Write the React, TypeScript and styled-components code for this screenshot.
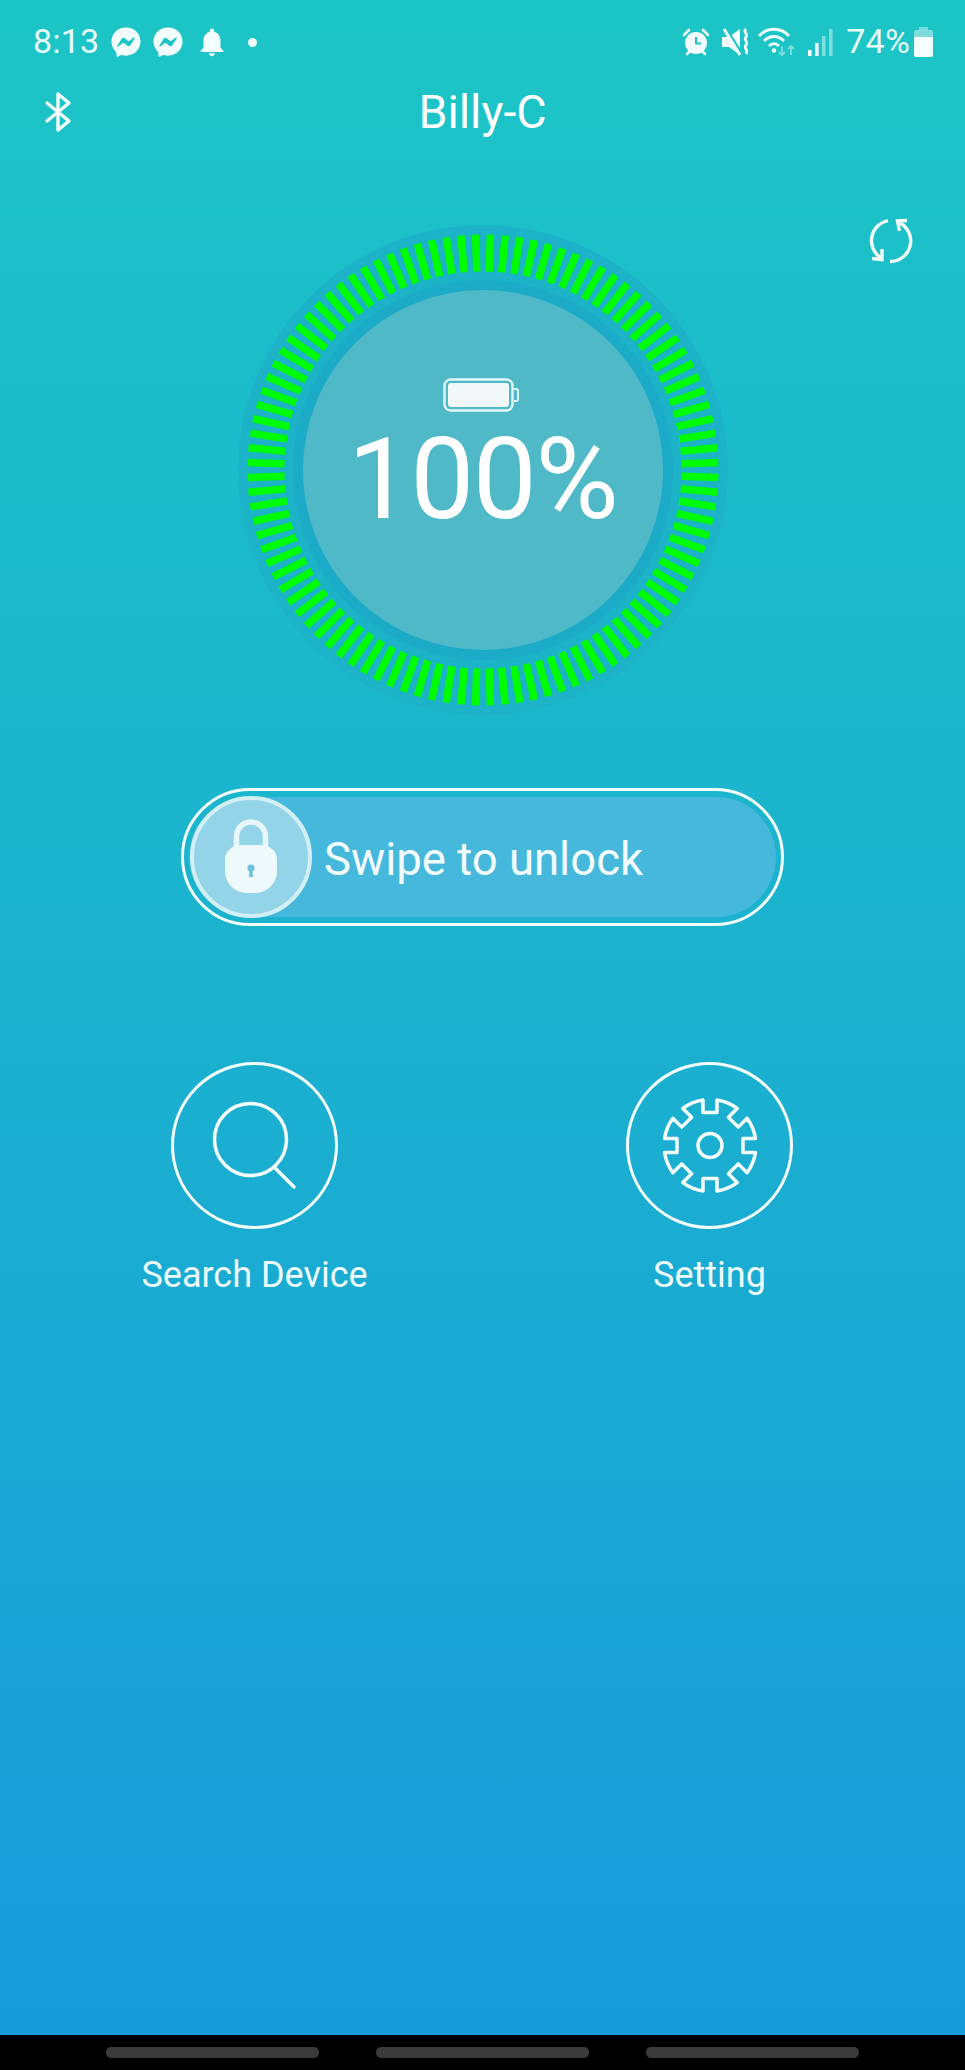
import React from 'react'
import styled, { createGlobalStyle } from 'styled-components'
import { FaFacebookMessenger } from 'react-icons/fa'
import { MdNotifications } from 'react-icons/md'

const GlobalStyle = createGlobalStyle`
  html, body {
    margin: 0;
    padding: 0;
    background: #000;
  }
  * {
    box-sizing: border-box;
  }
`

const Screen = styled.div`
  width: 965px;
  height: 2070px;
  display: flex;
  flex-direction: column;
  overflow: hidden;
  font-family: Roboto, "Liberation Sans", sans-serif;
  color: #fff;
`

const Content = styled.div`
  flex: 1;
  display: flex;
  flex-direction: column;
  background: linear-gradient(180deg, #1cc5c6 0%, #1bb3ce 45%, #189bdb 100%);
`

const StatusBar = styled.div`
  height: 44px;
  margin-top: 20px;
  padding: 0 32px 0 33px;
  display: flex;
  align-items: center;
`

const StatusGroup = styled.div<{ $right?: boolean }>`
  display: flex;
  align-items: center;
  gap: 12px;
  margin-left: ${(p) => (p.$right ? 'auto' : '0')};
`

const StatusText = styled.span<{ $tight?: boolean }>`
  font-size: 34px;
  line-height: 44px;
  margin-top: -2px;
  color: #e8fbfa;
  letter-spacing: 0.2px;
  margin-right: ${(p) => (p.$tight ? '-8px' : '0')};
`

const Dot = styled.span`
  width: 9px;
  height: 9px;
  margin-left: 7px;
  border-radius: 50%;
  background: #f2fdfc;
`

const WifiSlot = styled.span`
  display: flex;
  margin-left: -4px;
`

const Header = styled.div`
  height: 64px;
  margin-top: 16px;
  display: grid;
  grid-template-columns: 1fr auto 1fr;
  align-items: center;
  padding-left: 44px;
`

const Title = styled.h1`
  margin: 0;
  font-size: 46.5px;
  font-weight: 400;
  line-height: 64px;
  padding-right: 44px;
`

const GaugeRow = styled.div`
  margin-top: 74px;
  display: grid;
  grid-template-columns: 1fr 490px 1fr;
`

const RefreshCell = styled.div`
  grid-column: 3;
  display: flex;
  justify-content: flex-end;
  padding-right: 52px;
`

const Gauge = styled.div`
  grid-column: 2;
  grid-row: 1;
  position: relative;
  width: 490px;
  height: 490px;
  margin-top: 7px;
  border-radius: 50%;
  background: #1cb3c8;
  display: flex;
  align-items: center;
  justify-content: center;
`

const TickRing = styled.svg`
  position: absolute;
  inset: 0;
`

const Dial = styled.div`
  width: 380px;
  height: 380px;
  border-radius: 50%;
  border: 10px solid #1cabc6;
  background: #4fb9c8;
  display: flex;
  flex-direction: column;
  align-items: center;
  padding-top: 88px;
`

const DialBatteryWrap = styled.div`
  margin-right: 4px;
  line-height: 0;
`

const Percent = styled.div`
  font-size: 114px;
  font-weight: 400;
  line-height: 116px;
  margin-top: 9px;
  letter-spacing: -1.5px;
`

const SwipeFrame = styled.div`
  width: 603px;
  height: 138px;
  margin: 73px 0 0 181px;
  padding: 6px 5px;
  border: 3px solid #f4fdfd;
  border-radius: 69px;
`

const SwipeTrack = styled.div`
  height: 120px;
  border-radius: 60px;
  background: #46b8dc;
  display: flex;
  align-items: center;
  gap: 12px;
`

const Knob = styled.div`
  width: 122px;
  height: 122px;
  margin: -1px 0 -1px 1px;
  flex: none;
  border-radius: 50%;
  border: 4px solid #d3eff6;
  background: #93d4e8;
  display: flex;
  align-items: center;
  justify-content: center;
`

const SwipeLabel = styled.span`
  font-size: 45.5px;
  line-height: 60px;
  padding-top: 5px;
  color: #f3fcfe;
`

const Actions = styled.div`
  margin: 136px 0 0 104.5px;
  display: grid;
  grid-template-columns: 300px 300px;
  column-gap: 155px;
`

const Action = styled.div`
  display: flex;
  flex-direction: column;
  align-items: center;
`

const ActionCircle = styled.div`
  width: 167px;
  height: 167px;
  border-radius: 50%;
  border: 3.5px solid #f4fdfd;
  display: flex;
  align-items: center;
  justify-content: center;
`

const ActionLabel = styled.span`
  margin-top: 24px;
  font-size: 36px;
  line-height: 44px;
  color: #eefbfd;
`

const NavBar = styled.div`
  height: 35px;
  flex: none;
  background: #000;
  padding: 12px 106px 0;
  display: flex;
  justify-content: space-between;
  align-items: flex-start;
`

const NavPill = styled.div`
  width: 213px;
  height: 11px;
  border-radius: 5px;
  background: #3a3a3a;
`

const ticks = Array.from({ length: 100 }, (_, i) => (i * 360) / 100 + 1.8)

// gear outline: rim with 8 square notches cut in
function gearPath(cx: number, cy: number, R: number, r: number, half: number) {
  let d = ''
  for (let i = 0; i < 8; i++) {
    const a = (i * Math.PI) / 4 - Math.PI / 2
    const ca = Math.cos(a)
    const sa = Math.sin(a)
    const pt = (along: number, side: number) =>
      `${(cx + ca * along - sa * side).toFixed(2)} ${(cy + sa * along + ca * side).toFixed(2)}`
    const outer = Math.sqrt(R * R - half * half)
    d += `${i === 0 ? 'M' : `A${R} ${R} 0 0 1`} ${pt(outer, -half)} L${pt(r, -half)} L${pt(r, half)} L${pt(outer, half)} `
  }
  const first = -Math.PI / 2
  const outer = Math.sqrt(R * R - half * half)
  const x = cx + Math.cos(first) * outer + Math.sin(first) * half
  const y = cy + Math.sin(first) * outer - Math.cos(first) * half
  return `${d}A${R} ${R} 0 0 1 ${x.toFixed(2)} ${y.toFixed(2)}Z`
}

function AlarmIcon() {
  return (
    <svg width="28" height="30" viewBox="0 0 28 30">
      <circle cx="14" cy="16" r="11" fill="#f4fdfd" />
      <path d="M14 10v6.5h5" fill="none" stroke="#1dc4c6" strokeWidth="2" />
      <path d="M2 8l5-5M26 8l-5-5" stroke="#f4fdfd" strokeWidth="2.6" strokeLinecap="round" />
      <path d="M5 27l3-3M23 27l-3-3" stroke="#f4fdfd" strokeWidth="2.6" strokeLinecap="round" />
    </svg>
  )
}

function MuteIcon() {
  return (
    <svg width="28" height="30" viewBox="0 0 28 30">
      <path d="M0 10h7l11-8v26L7 20H0z" fill="#f4fdfd" />
      <path d="M3 1l17 27" stroke="#1cc4c6" strokeWidth="4" />
      <path d="M2 2l16 26" stroke="#f4fdfd" strokeWidth="3" />
      <path d="M24 2c-4 3 3 5 0 8s3 5 0 8 3 5 0 9" fill="none" stroke="#f4fdfd" strokeWidth="2.8" />
    </svg>
  )
}

function WifiIcon() {
  return (
    <svg width="38" height="30" viewBox="0 0 38 30">
      <path d="M1 9c8-9 22-9 30 0" fill="none" stroke="#f4fdfd" strokeWidth="2.8" />
      <path d="M6 14c6-6 14-6 20 0" fill="none" stroke="#f4fdfd" strokeWidth="2.8" />
      <path d="M11 19c3-3 7-3 10 0" fill="none" stroke="#f4fdfd" strokeWidth="2.8" />
      <circle cx="16" cy="23.5" r="2.2" fill="#f4fdfd" />
      <path d="M24 19v9M21 25l3 3 3-3" fill="none" stroke="#7fdcdc" strokeWidth="1.8" />
      <path d="M33 28v-9M30 22l3-3 3 3" fill="none" stroke="#7fdcdc" strokeWidth="1.8" />
    </svg>
  )
}

function SignalIcon() {
  return (
    <svg width="26" height="28" viewBox="0 0 26 28">
      <rect x="0" y="22" width="3.6" height="6" fill="#f4fdfd" />
      <rect x="7" y="15" width="3.6" height="13" fill="#f4fdfd" />
      <rect x="14" y="8" width="3.6" height="20" fill="#7fdcdc" />
      <rect x="21" y="1" width="3.6" height="27" fill="#7fdcdc" />
    </svg>
  )
}

function PhoneBattery() {
  return (
    <svg width="19" height="30" viewBox="0 0 19 30">
      <path d="M5 0h9v3h3a2 2 0 0 1 2 2v5H0V5a2 2 0 0 1 2-2h3z" fill="#7fdcdc" />
      <path d="M0 10h19v18a2 2 0 0 1-2 2H2a2 2 0 0 1-2-2z" fill="#f4fdfd" />
    </svg>
  )
}

function BluetoothIcon() {
  return (
    <svg width="30" height="42" viewBox="0 0 30 42">
      <path
        d="M3 12l22 18-11 9V3l11 9L3 30"
        fill="none"
        stroke="#f4fdfd"
        strokeWidth="3.4"
        strokeLinecap="round"
        strokeLinejoin="round"
      />
    </svg>
  )
}

function RefreshIcon() {
  return (
    <svg width="46" height="46" viewBox="0 0 46 46" fill="none" stroke="#f4fdfd" strokeWidth="3.4">
      <path d="M33 5A20.5 20.5 0 0 1 23 43.5" />
      <path d="M40 2.5L30.5 2.8L32.5 13" />
      <path d="M21 2.6A20.5 20.5 0 0 0 14 40" />
      <path d="M5 40.5L15 41.5L15 31" />
    </svg>
  )
}

function DialBattery() {
  return (
    <svg width="76" height="34" viewBox="0 0 76 34">
      <rect x="1.5" y="1.5" width="68" height="31" rx="6" fill="none" stroke="#e2f6f6" strokeWidth="2.4" />
      <rect x="5" y="5" width="61" height="24" rx="3" fill="#f2f7f8" />
      <path d="M71 11h2a2 2 0 0 1 2 2v8a2 2 0 0 1-2 2h-2" fill="none" stroke="#e2f6f6" strokeWidth="2" />
    </svg>
  )
}

function LockIcon() {
  return (
    <svg width="60" height="76" viewBox="0 0 60 76">
      <path d="M15.5 34V17.5a14.5 14.5 0 0 1 29 0V34" fill="none" stroke="#e6f6fb" strokeWidth="5.5" />
      <path
        d="M20 26h20c8 0 16 6 16 14v12c0 12-10 22-22 22h-8C14 74 4 64 4 52V40c0-8 8-14 16-14z"
        fill="#eef9fc"
      />
      <circle cx="30" cy="49" r="3.6" fill="#6cc3dc" />
      <path d="M28.6 50h2.8l.6 8h-4z" fill="#6cc3dc" />
    </svg>
  )
}

function SearchIcon() {
  return (
    <svg width="100" height="100" viewBox="0 0 100 100" fill="none" stroke="#f4fdfd" strokeWidth="3.5">
      <circle cx="45.5" cy="43.5" r="36" />
      <path d="M69 71l20 20" strokeLinecap="round" />
    </svg>
  )
}

function GearIcon() {
  return (
    <svg width="100" height="100" viewBox="0 0 100 100" fill="none" stroke="#f4fdfd" strokeWidth="3.5">
      <path d={gearPath(50, 49.5, 46, 33, 7)} strokeLinejoin="round" />
      <circle cx="50" cy="49.5" r="12" />
    </svg>
  )
}

export default function App() {
  return (
    <Screen>
      <GlobalStyle />
      <Content>
        <StatusBar>
          <StatusGroup>
            <StatusText>8:13</StatusText>
            <FaFacebookMessenger size={30} color="#f4fdfd" />
            <FaFacebookMessenger size={30} color="#f4fdfd" />
            <MdNotifications size={34} color="#f4fdfd" />
            <Dot />
          </StatusGroup>
          <StatusGroup $right>
            <AlarmIcon />
            <MuteIcon />
            <WifiSlot>
              <WifiIcon />
            </WifiSlot>
            <SignalIcon />
            <StatusText $tight>74%</StatusText>
            <PhoneBattery />
          </StatusGroup>
        </StatusBar>
        <Header>
          <BluetoothIcon />
          <Title>Billy-C</Title>
        </Header>
        <GaugeRow>
          <Gauge>
            <TickRing width="490" height="490" viewBox="0 0 490 490">
              {ticks.map((deg) => (
                <rect
                  key={deg}
                  x="241.25"
                  y="9.5"
                  width="7.5"
                  height="37"
                  fill="#00fc00"
                  transform={`rotate(${deg} 245 245)`}
                />
              ))}
            </TickRing>
            <Dial>
              <DialBatteryWrap>
                <DialBattery />
              </DialBatteryWrap>
              <Percent>100%</Percent>
            </Dial>
          </Gauge>
          <RefreshCell>
            <RefreshIcon />
          </RefreshCell>
        </GaugeRow>
        <SwipeFrame>
          <SwipeTrack>
            <Knob>
              <LockIcon />
            </Knob>
            <SwipeLabel>Swipe to unlock</SwipeLabel>
          </SwipeTrack>
        </SwipeFrame>
        <Actions>
          <Action>
            <ActionCircle>
              <SearchIcon />
            </ActionCircle>
            <ActionLabel>Search Device</ActionLabel>
          </Action>
          <Action>
            <ActionCircle>
              <GearIcon />
            </ActionCircle>
            <ActionLabel>Setting</ActionLabel>
          </Action>
        </Actions>
      </Content>
      <NavBar>
        <NavPill />
        <NavPill />
        <NavPill />
      </NavBar>
    </Screen>
  )
}
